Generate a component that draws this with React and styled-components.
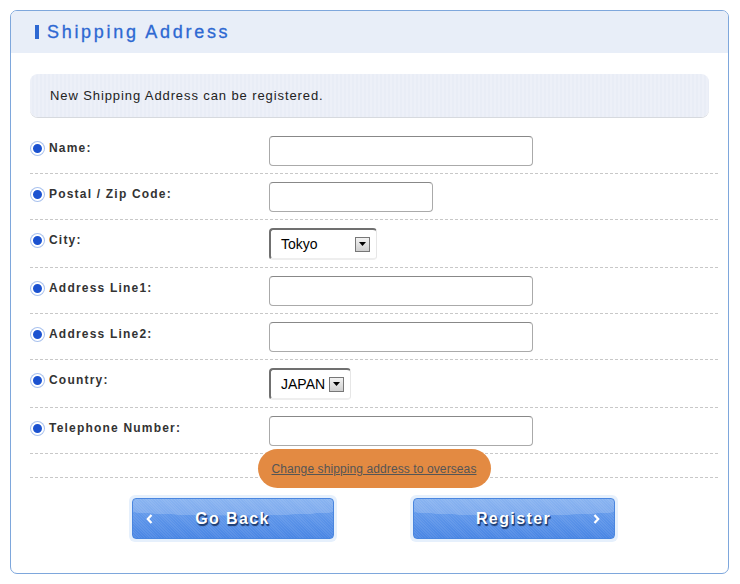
import React from 'react';
import styled, { createGlobalStyle } from 'styled-components';

const GlobalStyle = createGlobalStyle`
  body {
    margin: 0;
    background: #fff;
    font-family: "Liberation Sans", Arial, sans-serif;
  }
`;

const fields = [
  { label: 'Name', kind: 'input', width: 264 },
  { label: 'Postal / Zip Code', kind: 'input', width: 164 },
  { label: 'City', kind: 'select', value: 'Tokyo', width: 108 },
  { label: 'Address Line1', kind: 'input', width: 264 },
  { label: 'Address Line2', kind: 'input', width: 264 },
  { label: 'Country', kind: 'select', value: 'JAPAN', width: 82 },
  { label: 'Telephone Number', kind: 'input', width: 264 },
];

export default function App() {
  return (
    <>
      <GlobalStyle />
      <Panel>
        <Header>
          <TitleBar />
          <Title>Shipping Address</Title>
        </Header>
        <Body>
          <Notice>New Shipping Address can be registered.</Notice>
          {fields.map((f, i) => (
            <Row key={f.label} $first={i === 0}>
              <Label>
                <Radio />
                {f.label}:
              </Label>
              {f.kind === 'input' ? (
                <TextInput style={{ width: f.width }} />
              ) : (
                <Select style={{ width: f.width }}>
                  <span>{f.value}</span>
                  <ArrowBox>
                    <svg width="7" height="4" viewBox="0 0 7 4">
                      <path d="M0 0h7L3.5 4z" fill="#000" />
                    </svg>
                  </ArrowBox>
                </Select>
              )}
            </Row>
          ))}
          <LinkRow>
            <Pill>
              <a href="#">Change shipping address to overseas</a>
            </Pill>
          </LinkRow>
          <Buttons>
            <ButtonHalo>
              <Button>
                <Chevron $side="left">
                  <svg width="7" height="10" viewBox="0 0 7 10">
                    <path d="M5.5 1L1.8 5l3.7 4" fill="none" stroke="#fff" strokeWidth="2.2" />
                  </svg>
                </Chevron>
                Go Back
              </Button>
            </ButtonHalo>
            <ButtonHalo>
              <Button>
                Register
                <Chevron $side="right">
                  <svg width="7" height="10" viewBox="0 0 7 10">
                    <path d="M1.5 1l3.7 4-3.7 4" fill="none" stroke="#fff" strokeWidth="2.2" />
                  </svg>
                </Chevron>
              </Button>
            </ButtonHalo>
          </Buttons>
        </Body>
      </Panel>
    </>
  );
}

const Panel = styled.div`
  margin: 10px 0 0 10px;
  width: 719px;
  height: 564px;
  border: 1px solid #7ea7dc;
  border-radius: 7px;
  overflow: hidden;
  box-sizing: border-box;
`;

const Header = styled.div`
  height: 42px;
  background: #e8eef8;
  display: flex;
  align-items: center;
  padding-left: 24px;
  gap: 8px;
`;

const TitleBar = styled.span`
  display: block;
  width: 4px;
  height: 14px;
  background: #2d68d2;
`;

const Title = styled.h1`
  margin: 0;
  font-size: 18px;
  font-weight: normal;
  letter-spacing: 2.7px;
  color: #2d68d2;
  -webkit-text-stroke: 0.3px #2d68d2;
`;

const Body = styled.div`
  padding: 21px 10px 0 19px;
`;

const Notice = styled.div`
  margin-right: 9px;
  height: 43px;
  box-sizing: border-box;
  border-radius: 8px;
  background: repeating-linear-gradient(90deg, #edf0f8 0 2px, #e9edf6 2px 4px);
  box-shadow: 0 1px 0 #d6d9de;
  display: flex;
  align-items: center;
  padding-left: 20px;
  font-size: 13px;
  letter-spacing: 0.9px;
  color: #222;
`;

const Row = styled.div`
  display: flex;
  align-items: flex-start;
  padding: ${p => (p.$first ? '9px' : '8px')} 0 7px;
  margin-top: ${p => (p.$first ? '10px' : '0')};
  border-bottom: 1px dashed #c8c8c8;
`;

const Label = styled.div`
  width: 239px;
  display: flex;
  align-items: center;
  gap: 5px;
  padding-top: 5px;
  font-size: 12px;
  font-weight: bold;
  letter-spacing: 1.2px;
  color: #333;
`;

const Radio = styled.span`
  width: 9px;
  height: 9px;
  border-radius: 50%;
  background: #1b52d0;
  border: 2px solid #fff;
  box-shadow: 0 0 0 1px #a9c2ee;
  margin-left: 1px;
`;

const TextInput = styled.input`
  height: 30px;
  box-sizing: border-box;
  border: 1px solid #aaa;
  border-top-color: #888;
  border-radius: 4px;
  padding: 0 6px;
  font-size: 14px;
  font-family: "Liberation Sans", Arial, sans-serif;
`;

const Select = styled.div`
  height: 32px;
  box-sizing: border-box;
  display: flex;
  align-items: center;
  justify-content: space-between;
  padding: 0 6px 0 10px;
  border-radius: 4px;
  border-top: 2px solid #707070;
  border-left: 2px solid #707070;
  border-right: 1px solid #e6e6e6;
  border-bottom: 2px solid #eee;
  font-size: 14px;
  color: #000;
`;

const ArrowBox = styled.span`
  width: 15px;
  height: 15px;
  box-sizing: border-box;
  border: 1px solid #777;
  background: linear-gradient(#f2f2f2, #cfcfcf);
  display: flex;
  align-items: center;
  justify-content: center;
`;

const LinkRow = styled.div`
  height: 23px;
  display: flex;
  justify-content: center;
  align-items: flex-start;
  border-bottom: 1px dashed #c8c8c8;
`;

const Pill = styled.div`
  margin-top: -5px;
  width: 233px;
  height: 39px;
  border-radius: 20px;
  background: #e38a42;
  display: flex;
  align-items: center;
  justify-content: center;
  position: relative;

  a {
    color: #555;
    font-size: 12px;
    letter-spacing: 0.1px;
  }
`;

const Buttons = styled.div`
  display: flex;
  justify-content: center;
  gap: 73px;
  margin-top: 17px;
  padding-right: 2px;
`;

const ButtonHalo = styled.div`
  width: 208px;
  height: 47px;
  box-sizing: border-box;
  padding: 3px;
  border-radius: 6px;
  background: #e6f0fc;
`;

const Button = styled.button`
  width: 100%;
  height: 100%;
  position: relative;
  border: 1px solid #4a86df;
  border-radius: 4px;
  background:
    repeating-linear-gradient(45deg, rgba(255,255,255,0.08) 0 1px, transparent 1px 2px),
    radial-gradient(ellipse 120% 60% at 50% 0%, rgba(255,255,255,0.18) 0 70%, transparent 71%),
    linear-gradient(#6fa3ee, #4a86e4);
  color: #fff;
  font-family: "Liberation Sans", Arial, sans-serif;
  font-size: 16px;
  font-weight: bold;
  letter-spacing: 1.4px;
  text-shadow: 1px 1px 0 #1c3f7a, 1px 2px 1px #203a6a;
  cursor: pointer;
`;

const Chevron = styled.span`
  position: absolute;
  top: 50%;
  transform: translateY(-50%);
  display: flex;
  ${p => (p.$side === 'left' ? 'left: 13px;' : 'right: 14px;')}
`;
